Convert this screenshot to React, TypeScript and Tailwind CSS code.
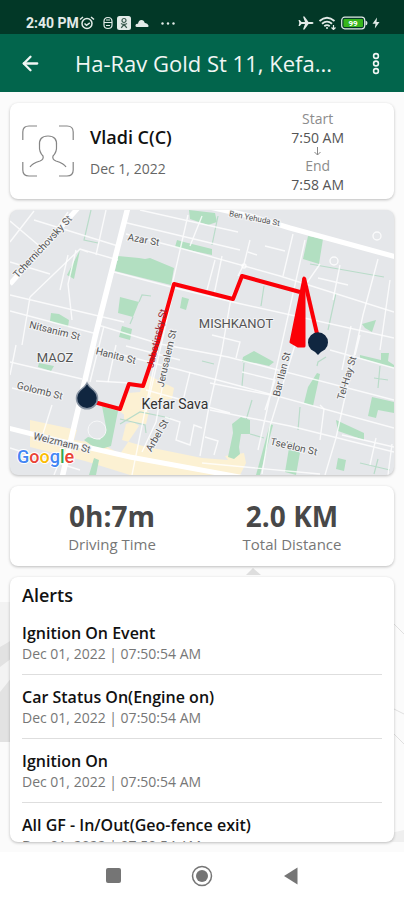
import { ArrowLeft } from "lucide-react";

interface Alert {
  id: number;
  title: string;
  time: string;
}

const alerts: Alert[] = [
  { id: 1, title: "Ignition On Event", time: "Dec 01, 2022 | 07:50:54 AM" },
  { id: 2, title: "Car Status On(Engine on)", time: "Dec 01, 2022 | 07:50:54 AM" },
  { id: 3, title: "Ignition On", time: "Dec 01, 2022 | 07:50:54 AM" },
  { id: 4, title: "All GF - In/Out(Geo-fence exit)", time: "Dec 01, 2022 | 07:50:54 AM" },
];

const CARD = "rounded-lg bg-white shadow-[0_1px_3px_rgba(0,0,0,0.25)]";

function StatusBar() {
  return (
    <div className="flex h-[34px] items-end justify-between bg-[#023827] pr-6 pb-1 pl-[26px] text-[#e3ebe8]">
      <div className="flex items-center gap-1 font-['Roboto',sans-serif] text-sm leading-[14px] font-bold">
        <span>2:40 PM</span>
        <svg className="-ml-1" width="16" height="14" viewBox="0 0 16 14" fill="none" stroke="currentColor" strokeWidth="1.5">
          <circle cx="8" cy="7.5" r="5" />
          <path d="M1 3.5 4 1M15 3.5 12 1M5.5 7.5 7.5 9.3 10.8 6.8" />
        </svg>
        <svg className="ml-1" width="10" height="14" viewBox="0 0 10 14" fill="none" stroke="currentColor" strokeWidth="1.2">
          <path d="M1 5.5Q1 1.5 5 1.5T9 5.5V9Q9 12.5 5 12.5T1 9ZM1 6.5H9M3 4h4M3 9.5h4" />
        </svg>
        <svg width="14" height="14" viewBox="0 0 14 14">
          <rect width="14" height="14" rx="2.5" fill="currentColor" />
          <circle cx="7" cy="4.5" r="2" fill="none" stroke="#3a5a4e" strokeWidth="1.2" />
          <path d="M4 7.5Q7 9.5 10 7.5M7 8.5 4.2 11.8M7 8.5l2.8 3.3" fill="none" stroke="#3a5a4e" strokeWidth="1.3" />
        </svg>
        <svg width="14" height="14" viewBox="0 0 14 14" fill="currentColor">
          <path d="M1.5 11Q0 10.5.5 9 1.2 7.5 3 7.8 3.5 4 6.5 4 9 4 9.8 7 12.5 6.8 13.5 9.5 13.8 11 12.5 11Z" />
        </svg>
        <svg className="ml-2" width="14" height="14" viewBox="0 0 14 14" fill="currentColor">
          <circle cx="1.5" cy="7.5" r="1.2" />
          <circle cx="7" cy="7.5" r="1.2" />
          <circle cx="12.5" cy="7.5" r="1.2" />
        </svg>
      </div>
      <div className="flex items-center gap-1">
        <svg width="17" height="14" viewBox="0 0 17 14" fill="currentColor">
          <path d="M16.5 7Q16.5 8 15 8H11.5L7.5 13.5H6L8 8H4.5L2.8 10H1.5L2.3 7 1.5 4H2.8L4.5 6H8L6 .5H7.5L11.5 6H15Q16.5 6 16.5 7Z" />
        </svg>
        <svg width="19" height="14" viewBox="0 0 19 14" fill="none" stroke="currentColor" strokeWidth="1.8">
          <path d="M1.5 5Q9 -1.5 16.5 5M4 7.8Q9 3.5 14 7.8M6.3 10.3Q9 8 11.7 10.3" />
          <circle cx="9" cy="12" r="1" fill="currentColor" stroke="none" />
          <path d="M15.5 9v4M13.5 11.5l2 2 2-2" strokeWidth="1.2" />
        </svg>
        <svg width="27" height="14" viewBox="0 0 27 14">
          <rect x=".7" y="1.2" width="23" height="11.6" rx="3" fill="none" stroke="currentColor" strokeWidth="1.2" />
          <rect x="2.5" y="3" width="19.5" height="8" rx="1" fill="#37b51c" />
          <path d="M24.5 4.5Q26.5 5 26.5 7T24.5 9.5Z" fill="currentColor" />
          <text x="12" y="10" textAnchor="middle" className="fill-white font-['Roboto',sans-serif] text-[8px] font-bold">99</text>
        </svg>
        <svg width="8" height="12" viewBox="0 0 8 12" fill="currentColor">
          <path d="M5 .5.5 6.8H3.5L2.8 11.5 7.5 5H4.5Z" />
        </svg>
      </div>
    </div>
  );
}

function AppBar() {
  return (
    <header className="flex h-[58px] items-center bg-[#02654c] text-[#f1f6f4]">
      <button type="button" aria-label="Back" className="ml-[18px] flex w-6 justify-center">
        <ArrowLeft size={23} strokeWidth={2.4} />
      </button>
      <h1 className="ml-[33px] flex-1 truncate text-[22px] leading-8">Ha-Rav Gold St 11, Kefa...</h1>
      <button type="button" aria-label="More options" className="mr-5 flex w-4 justify-center">
        <svg width="8" height="23" viewBox="0 0 8 23" fill="none" stroke="currentColor" strokeWidth="1.6">
          <circle cx="4" cy="4" r="2.4" />
          <circle cx="4" cy="11.5" r="2.4" />
          <circle cx="4" cy="19" r="2.4" />
        </svg>
      </button>
    </header>
  );
}

function TripCard() {
  return (
    <section className={`${CARD} flex h-24 shrink-0 items-center pr-[50px] pl-3`}>
      <svg width="52" height="52" viewBox="0 0 52 52" fill="none" stroke="#858585" strokeWidth="1.2">
        <path d="M.8 15V7Q.8 1 7 1H15M37 1H45Q51.2 1 51.2 7V15M51.2 37V45Q51.2 51 45 51H37M15 51H7Q.8 51 .8 45V37" />
        <path d="M8 42Q10 38.5 18 36 22 34.5 21 31 17 27 17.5 21 16.5 11 26 11T34.5 21Q35 27 31 31 30 34.5 34 36 42 38.5 44 42" />
      </svg>
      <div className="ml-4 flex-1 pt-1">
        <h2 className="text-lg leading-6 font-semibold text-[#111]">Vladi C(C)</h2>
        <p className="mt-2 text-sm leading-6 text-[#666]">Dec 1, 2022</p>
      </div>
      <div className="text-center text-sm leading-[19px] text-[#555]">
        <p className="text-[#8c8c8c]">Start</p>
        <p>7:50 AM</p>
        <svg className="mx-auto" width="9" height="9" viewBox="0 0 9 9" fill="none" stroke="#888">
          <path d="M4.5 0V8M1.5 5l3 3 3-3" />
        </svg>
        <p className="text-[#8c8c8c]">End</p>
        <p>7:58 AM</p>
      </div>
    </section>
  );
}

function RouteMap() {
  return (
    <section className="shrink-0 overflow-hidden rounded-lg bg-[#e5e7ea] shadow-[0_1px_3px_rgba(0,0,0,0.25)]">
      <svg className="block w-full" viewBox="10 210 384 265" role="img" aria-label="Trip route">
        {/* commercial areas */}
        <g fill="#fcf1d3">
          <path d="M30 420 77 430 74 440 102 444 120 454 139 426 118 410 124 400 128 393 140 392 146 374 174 388 172 399 148 402 147 417 126 424 122 440 143 446 202 458 228 460 225 456 244 453 246 463 240 475H130L85 461 30 447Z" />
          <path d="M124 408 149 412 146 424 124 420Z" />
        </g>
        {/* parks */}
        <g fill="#b2dfc1">
          <path d="M118 256 139 258 145 259 150 258 174 268 171 285 115 271Z" />
          <path d="M189 210 215 213 217 222 208 225 190 219Z" />
          <path d="M177 240 184 242 212 249V255L175 247Z" />
          <path d="M120 297 139 302 133 317 118 313Z" />
          <path d="M122 326 132 329 130 340 119 337Z" />
          <path d="M182 297 189 299 186 310 180 308Z" />
          <path d="M80 250 74 279 67 275Z" />
          <path d="M51 313 59 314 69 320 68 327 50 321Z" />
          <path d="M39 363 54 366 51 371 38 367Z" />
          <path d="M308 236 323 239 319 264 303 259Z" />
          <path d="M362 324 376 320 372 332 365 328Z" />
          <path d="M243 357 254 351 274 362 269 366 256 363 242 362Z" />
          <path d="M317 373 320 374 313 406 304 403 308 387Z" />
          <path d="M372 397 394 402V413L378 410 376 418 368 416Z" />
          <path d="M336 420 364 433V440L338 431Z" />
          <path d="M241 417 250 420 250 434 241 434 239 447 240 454 234 459 228 457 233 433 232 424Z" />
          <path d="M270 424 273 425 260 475H256Z" />
          <path d="M290 442 301 447 296 475 285 472Z" />
          <path d="M338 458 346 460 344 471 336 469Z" />
          <path d="M381 353 389 353 388 361 394 365V368L360 358V355L381 360Z" />
          <path d="M102 406 118 411 111 446 98 450 84 440 88 437 100 440 106 427Z" />
          <path d="M94 458 99 460 96 475H89L92 465Z" />
        </g>
        <circle cx="97" cy="430" r="9" fill="#e5e7ea" stroke="#f7f8f9" />
        {/* footpaths */}
        <g fill="none" stroke="#b9dcc9" strokeWidth="1.2">
          <path d="M91 210 84 240 98 243M139 302 142 295 151 296M133 317 130 324M218 216 212 245M310 264 384 277M336 293 328 330M264 286 261 306M244 363 242 386M202 361 214 364M300 407 298 430M252 400 246 420M250 434 264 438M317 366 318 362 326 357M380 366 378 388M374 378 388 380M360 463 390 470M378 459 374 474M120 419 145 425 146 433M170 418 140 412 120 424" />
        </g>
        {/* side streets */}
        <g fill="none" stroke="#fff" strokeOpacity=".8" strokeWidth="1.4">
          <path d="M10 221 43 249M10 242 34 211M43 249 68 212M10 295 124 322M10 311 97 334M30 297 80 249 118 260M80 249 88 252M34 220 118 246M106 210 96 255M72 320 68 284 76 250M30 297 22 345M10 362 82 379M16 345 10 375M41 440 52 405M10 448 80 470" />
          <path d="M126 234 180 248 280 276 394 312M114 272 175 288 237 303 394 338M123 222 240 250M202 216 190 246M188 215 158 347 132 475M215 260 206 294M140 210 238 232M98 325 160 344 228 357 394 400M92 347 180 370 240 386 394 428M175 284 160 350 146 412M104 326 90 382M96 381 130 383" />
          <path d="M293 234 283 276M250 240 244 264 238 276M285 251 265 246M222 256 214 295M248 252 257 255M378 259 363 315 336 438 325 475M242 276 231 298 222 350 208 412 200 456M305 240 280 352 258 450M295 345 270 426M320 264 306 284 298 330M210 410 290 426 394 452M146 390 230 413M210 383 280 397M330 350 394 368M351 326 342 370M390 280 380 350M340 265 333 300M318 278 348 285M360 335 355 355M320 405 324 409 320 440M270 426 262 474M202 463 320 474M205 437 218 441 214 455M376 438 370 465M392 444 388 475M342 435 394 447M165 372 156 422 142 452M165 417 180 422 176 440 190 445 194 425 202 428M12 388 50 397M116 345 108 382M60 290 68 255M126 346 180 360M10 262 50 274M265 410 275 380 242 372M212 335 240 342 236 358M182 405 190 372M54 475 62 455" />
          <circle cx="377" cy="236" r="4" />
          <circle cx="334" cy="261" r="4" />
          <circle cx="244" cy="266" r="2" />
        </g>
        {/* main roads */}
        <g fill="none" stroke="#fff">
          <path d="M128 207 96 333 62 478" strokeWidth="5.5" />
          <path d="M200 205 250 216 290 228 396 257" strokeWidth="5" />
          <path d="M8 428 60 441 130 457 245 478" strokeWidth="5" />
          <path d="M10 284 78 208" strokeWidth="5" />
        </g>
        {/* travelled route */}
        <g fill="none" stroke="#fb0007" strokeWidth="4" strokeLinejoin="round">
          <path d="M94 402 120 409 129 384 143 386 158 342 174 284 233 299 242 276 300 292" />
          <path d="M304 278 318 338" />
          <path d="M304 278 291 342 298 346 304 346Z" fill="#fb0007" strokeWidth="3" />
        </g>
        {/* labels */}
        <g className="font-['Roboto',sans-serif] text-[10px]" fill="#555" textAnchor="middle" stroke="#f3f4f5" strokeWidth="2" paintOrder="stroke">
          <text transform="translate(45 249) rotate(-47)">Tchernichovsky St</text>
          <text transform="translate(143 243) rotate(10)">Azar St</text>
          <text transform="translate(254 221) rotate(11)" className="text-[8px]">Ben Yehuda St</text>
          <text transform="translate(54 334) rotate(14)">Nitsanim St</text>
          <text transform="translate(115 359) rotate(14)">Hanita St</text>
          <text transform="translate(39 394) rotate(14)">Golomb St</text>
          <text transform="translate(61 446) rotate(14)">Weizmann St</text>
          <text transform="translate(160 339) rotate(-77)" stroke="none" fill="#9b2530">Jabotinsky St</text>
          <text transform="translate(170 359) rotate(-77)">Jerusalem St</text>
          <text transform="translate(160 437) rotate(-60)">Arbel St</text>
          <text transform="translate(285 375) rotate(-76)">Bar Ilan St</text>
          <text transform="translate(350 379) rotate(-73)">Tel-Hay St</text>
          <text transform="translate(293 450) rotate(13)">Tse'elon St</text>
          <text x="55" y="362" className="text-[13px]">MAOZ</text>
          <text x="236" y="328" className="text-[13px]">MISHKANOT</text>
          <text x="175" y="409" className="text-sm" fill="#333">Kefar Sava</text>
        </g>
        {/* start and end pins */}
        <g fill="#102640">
          <path d="M87 383Q89 387 94 390.5A10.5 10.5 0 1 1 80 390.5Q85 387 87 383Z" stroke="#8894a3" strokeWidth="1.5" />
          <path d="M318 355Q316 352 311 349.5A10 10 0 1 1 325 349.5Q320 352 318 355Z" />
        </g>
        <text x="17" y="463" className="font-['Roboto',sans-serif] text-lg font-medium" stroke="#fff" strokeWidth="2" paintOrder="stroke">
          <tspan fill="#4285f4">G</tspan>
          <tspan fill="#ea4335">o</tspan>
          <tspan fill="#fbbc05">o</tspan>
          <tspan fill="#4285f4">g</tspan>
          <tspan fill="#34a853">l</tspan>
          <tspan fill="#ea4335">e</tspan>
        </text>
      </svg>
    </section>
  );
}

function Stat({ value, label }: { value: string; label: string }) {
  return (
    <div className="text-center">
      <p className="text-[28px] leading-8 font-bold text-[#484848]">{value}</p>
      <p className="text-[15px] leading-6 text-[#777]">{label}</p>
    </div>
  );
}

function AlertList() {
  return (
    <section className={`${CARD} min-h-0 flex-1 overflow-hidden px-3 pt-1`}>
      <h2 className="text-lg leading-7 font-semibold text-[#111]">Alerts</h2>
      <ul className="divide-y divide-[#dedede] pt-[2px]">
        {alerts.map((alert) => (
          <li key={alert.id} className="h-16 pt-3">
            <h3 className="text-base leading-5 font-semibold text-[#111]">{alert.title}</h3>
            <p className="text-sm leading-[22px] text-[#777]">{alert.time}</p>
          </li>
        ))}
      </ul>
    </section>
  );
}

function Backdrop() {
  return (
    <svg className="absolute inset-0 -z-10 size-full" viewBox="0 0 404 760" preserveAspectRatio="none" aria-hidden="true">
      <path d="M246 483 253 476 261 483Z" fill="#dedede" />
      <path d="M0 550 14 532V650H0Z" fill="#e2e2e2" />
      <path d="M0 510H12V548L0 555Z" fill="#f2f2f2" />
      <path d="M0 575 12 566V585L0 600Z" fill="#f3f3f3" />
      <path d="M392 530 404 542M392 616 404 622M392 640 404 652" stroke="#e0e0e0" fill="none" />
      <path d="M180 750H404V738L360 748 300 745Z" fill="#efefef" />
    </svg>
  );
}

export default function App() {
  return (
    <div className="flex h-screen flex-col bg-white font-['Open_Sans',sans-serif]">
      <StatusBar />
      <AppBar />
      <main className="relative isolate flex min-h-0 flex-1 flex-col gap-[11px] bg-[#fbfbfb] px-[10px] pt-[11px] pb-[10px]">
        <Backdrop />
        <TripCard />
        <RouteMap />
        <section className={`${CARD} grid h-20 shrink-0 grid-cols-2 items-center px-3 pt-1`}>
          <Stat value="0h:7m" label="Driving Time" />
          <Stat value="2.0 KM" label="Total Distance" />
        </section>
        <AlertList />
      </main>
      <nav className="flex h-12 items-center justify-center gap-[67px] text-[#757575]">
        <button type="button" aria-label="Recent apps">
          <svg width="22" height="22" viewBox="0 0 22 22" fill="currentColor">
            <rect x="4" y="3" width="15" height="15" rx="2" />
          </svg>
        </button>
        <button type="button" aria-label="Home">
          <svg width="22" height="22" viewBox="0 0 22 22" fill="currentColor">
            <circle cx="11" cy="11" r="9.5" fill="none" stroke="currentColor" strokeWidth="1.5" />
            <circle cx="11" cy="11" r="6" />
          </svg>
        </button>
        <button type="button" aria-label="Go back">
          <svg width="22" height="22" viewBox="0 0 22 22" fill="currentColor">
            <path d="M4 11 17.5 2.5V19.5Z" />
          </svg>
        </button>
      </nav>
    </div>
  );
}
